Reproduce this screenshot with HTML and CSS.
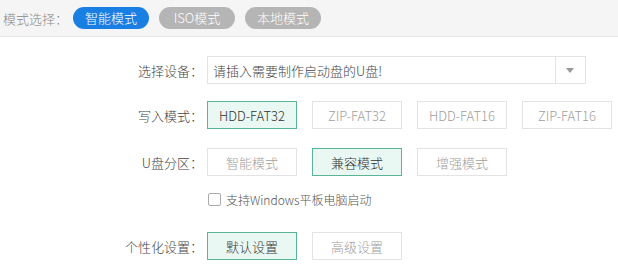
FILE: index.html
```html
<!DOCTYPE html>
<html lang="zh-CN">
<head>
    <meta charset="UTF-8">
    <title>U盘启动制作</title>
    <link rel="stylesheet" href="styles.css">
</head>
<body>

<div class="mode-bar">
    <span class="mode-label">模式选择：</span>
    <button class="pill active">智能模式</button>
    <button class="pill">ISO模式</button>
    <button class="pill">本地模式</button>
</div>

<div class="form">
    <div class="row row-select">
        <label class="label">选择设备：</label>
        <div class="select">
            <span class="select-text">请插入需要制作启动盘的U盘!</span>
            <span class="select-arrow"></span>
        </div>
    </div>

    <div class="row row-write">
        <label class="label">写入模式：</label>
        <div class="options">
            <button class="option selected">HDD-FAT32</button>
            <button class="option">ZIP-FAT32</button>
            <button class="option">HDD-FAT16</button>
            <button class="option">ZIP-FAT16</button>
        </div>
    </div>

    <div class="row row-part">
        <label class="label">U盘分区：</label>
        <div class="options">
            <button class="option">智能模式</button>
            <button class="option selected">兼容模式</button>
            <button class="option">增强模式</button>
        </div>
    </div>

    <div class="row row-check">
        <span class="label"></span>
        <label class="check">
            <span class="check-box"></span>
            支持Windows平板电脑启动
        </label>
    </div>

    <div class="row">
        <label class="label">个性化设置：</label>
        <div class="options">
            <button class="option selected">默认设置</button>
            <button class="option">高级设置</button>
        </div>
    </div>
</div>

</body>
</html>
```

FILE: styles.css
```css
body {
    margin: 0;
    background: #fff;
    font-family: "Noto Sans CJK SC", "Noto Sans", sans-serif;
    font-weight: 300;
    font-size: 13px;
    color: #444;
}
button {
    font-family: inherit;
    font-weight: 300;
    cursor: pointer;
}
.mode-bar {
    height: 36px;
    display: flex;
    align-items: center;
    gap: 10px;
    padding-left: 3px;
    background: #f5f5f5;
    border-bottom: 1px solid #e8e8e8;
}
.mode-label {
    width: 60px;
    color: #8a8a8a;
    white-space: nowrap;
}
.pill {
    width: 76px;
    height: 22px;
    border: none;
    border-radius: 11px;
    background: #b5b5b5;
    color: #fff;
    font-size: 13px;
    padding: 0;
    line-height: 22px;
}
.pill.active {
    background: #1a7fe2;
}
.form {
    padding-top: 19px;
}
.row {
    display: flex;
    align-items: center;
    margin-bottom: 19px;
}
.row-select {
    margin-bottom: 17px;
}
.row-part {
    margin-bottom: 15px;
}
.row-check {
    margin-bottom: 25px;
}
.label {
    width: 203px;
    padding-right: 4px;
    text-align: right;
    color: #444;
    flex-shrink: 0;
}
.select {
    width: 377px;
    height: 26px;
    border: 1px solid #e3e3e3;
    display: flex;
    align-items: center;
}
.select-text {
    flex: 1;
    padding-left: 5px;
    color: #444;
}
.select-arrow {
    width: 29px;
    height: 26px;
    border-left: 1px solid #e3e3e3;
    position: relative;
}
.select-arrow::after {
    content: "";
    position: absolute;
    left: 10px;
    top: 11px;
    border-left: 4px solid transparent;
    border-right: 4px solid transparent;
    border-top: 5px solid #999;
}
.options {
    display: flex;
    gap: 15px;
}
.option {
    width: 90px;
    height: 28px;
    padding: 0;
    background: #fff;
    border: 1px solid #e3e3e3;
    color: #a0a0a0;
    font-size: 13px;
}
.option.selected {
    background: #e9f8f3;
    border-color: #5ab595;
    color: #333;
}
.check {
    display: flex;
    align-items: center;
    gap: 5px;
    font-size: 12px;
    color: #555;
    height: 16px;
}
.check-box {
    width: 11px;
    height: 11px;
    border: 1px solid #aaa;
    border-radius: 2px;
    background: #fff;
    margin-left: 1px;
}
```
